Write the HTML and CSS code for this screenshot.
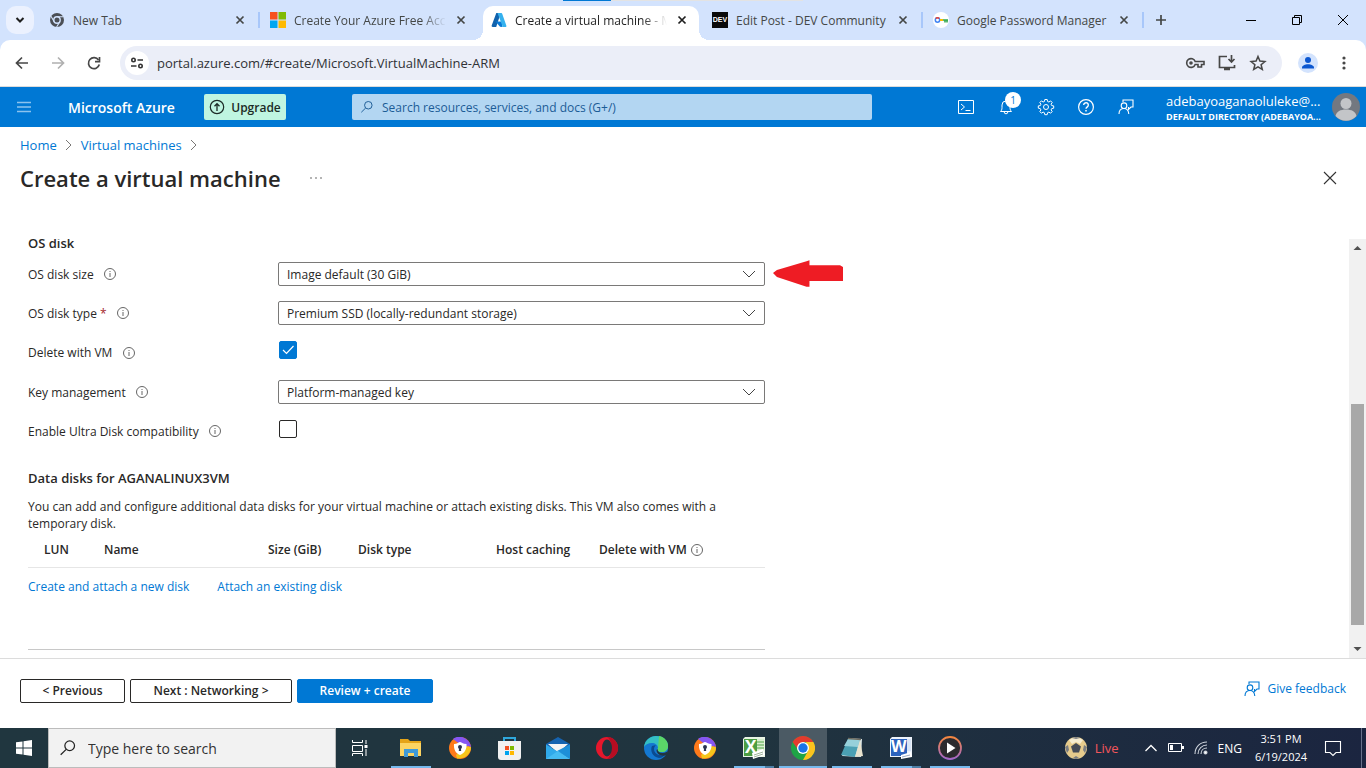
FILE: index.html
```html
<!DOCTYPE html>
<html lang="en">
<head>
<meta charset="UTF-8">
<meta name="viewport" content="width=device-width, initial-scale=1.0">
<title>Create a virtual machine - Microsoft Azure</title>
<link rel="stylesheet" href="styles.css">
</head>
<body>
    <!-- shared icons -->
    <svg class="sprite" aria-hidden="true">
        <symbol id="close" viewBox="0 0 16 16"><path d="M4.500 4.500l7 7M11.500 4.500l-7 7" fill="none" stroke="currentColor" stroke-width="1.700"/></symbol>
        <symbol id="info" viewBox="0 0 14 14"><circle cx="7" cy="7" r="5.500" fill="none" stroke="currentColor"/><path d="M7 6v4M7 4v1" stroke="currentColor"/></symbol>
        <symbol id="down" viewBox="0 0 16 16"><path d="M2 5l6 6 6-6" fill="none" stroke="currentColor"/></symbol>
        <symbol id="right" viewBox="0 0 10 12"><path d="M2 1l5 5-5 5" fill="none" stroke="currentColor"/></symbol>
        <symbol id="search" viewBox="0 0 16 16"><circle cx="9.500" cy="6" r="4.300" fill="none" stroke="currentColor" stroke-width="1.100"/><path d="M6.400 9.200L1.500 14" stroke="currentColor" stroke-width="1.100"/></symbol>
        <symbol id="feedback" viewBox="0 0 16 16"><path d="M5 3V1h10v7h-2l-2.500 2.500V8" fill="none" stroke="currentColor" stroke-width="1.100"/><circle cx="6" cy="6.700" r="2.800" fill="none" stroke="currentColor" stroke-width="1.100"/><path d="M1 15c0-3.500 2-5.500 5-5.500 2.500 0 4.500 2 4.800 5.500" fill="none" stroke="currentColor" stroke-width="1.100"/></symbol>
        <symbol id="avast" viewBox="0 0 24 24"><circle cx="12" cy="12" r="11" fill="#ff7a1a"/><path d="M6 3a11 11 0 0 1 17 9c-5-5-9-7-17-9z" fill="#7a4cf0"/><path d="M5 3c5-4 14-2 17 6l-5 3z" fill="#8657f4"/><path d="M23 11c0 7-6 12-14 11.500L8 19l9-9z" fill="#f5c51b"/><path d="M6 8c3 0 5-2 6-2s3 2 6.500 2c.5 5-2 9.500-6.500 11C7.500 17.500 5.500 13 6 8z" fill="#fff"/><circle cx="12" cy="11" r="2" fill="#2b3350"/><path d="M11.200 11h1.600l.4 4h-2.400z" fill="#2b3350"/></symbol>
    </svg>

    <header class="browser">
        <div class="load-line"></div>
        <div class="tab-strip">
            <button class="tab-search" aria-label="Search tabs"><svg width="16" height="16" viewBox="0 0 16 16"><path d="M4.500 6l3.500 3.500L11.500 6" fill="none" stroke="#1f1f1f" stroke-width="2"/></svg></button>
            <div class="tabs">
                <div class="tab">
                    <svg class="tab-icon" viewBox="0 0 16 16"><circle cx="8" cy="8" r="7" fill="#4b4f55"/><circle cx="8" cy="8" r="3.200" fill="#4b4f55" stroke="#d3e3fd" stroke-width="1.400"/><path d="M8 4.700h6.500M5.200 9.700L2 4.200M10.800 9.700L7.600 15" stroke="#d3e3fd" stroke-width="1.100"/></svg>
                    <span class="tab-title">New Tab</span>
                    <button class="tab-close" aria-label="Close tab"><svg><use href="#close"/></svg></button>
                    <span class="tab-line"></span>
                </div>
                <div class="tab">
                    <svg class="tab-icon" viewBox="0 0 16 16"><path d="M0 0h7.500v7.500H0z" fill="#f7511d"/><path d="M8.500 0H16v7.500H8.500z" fill="#80bb03"/><path d="M0 8.500h7.500V16H0z" fill="#02a6f0"/><path d="M8.500 8.500H16V16H8.500z" fill="#feba02"/></svg>
                    <span class="tab-title faded">Create Your Azure Free Acco</span>
                    <button class="tab-close" aria-label="Close tab"><svg><use href="#close"/></svg></button>
                </div>
                <div class="tab active">
                    <svg class="tab-icon" viewBox="0 0 16 16"><path d="M5.300 1h4.400L5.200 15H1.700c-.8 0-1.300-.7-1-1.400z" fill="#1062ad"/><path d="M4.500 9.500h7L11 15l-2-.2z" fill="#0878d4"/><path d="M6.500 1h3.800c.4 0 .8.300.9.700l4.200 12c.2.700-.3 1.300-1 1.300h-4c.7 0 1.100-.7.900-1.300z" fill="#35b1ee"/></svg>
                    <span class="tab-title faded">Create a virtual machine - M</span>
                    <button class="tab-close" aria-label="Close tab"><svg><use href="#close"/></svg></button>
                </div>
                <div class="tab">
                    <span class="tab-icon dev">DEV</span>
                    <span class="tab-title">Edit Post - DEV Community</span>
                    <button class="tab-close" aria-label="Close tab"><svg><use href="#close"/></svg></button>
                    <span class="tab-line"></span>
                </div>
                <div class="tab">
                    <svg class="tab-icon" viewBox="0 0 16 16"><circle cx="8" cy="8" r="8" fill="#fff"/><circle cx="4.500" cy="8" r="2.200" fill="none" stroke="#4285f4" stroke-width="1.500"/><path d="M2.800 6.500a2.200 2.200 0 0 1 3.400 0" fill="none" stroke="#ea4335" stroke-width="1.500"/><path d="M7 8h3" stroke="#fbbc04" stroke-width="2"/><path d="M10 8h5M12 8v2.500M14 8v2.500" stroke="#34a853" stroke-width="1.600"/></svg>
                    <span class="tab-title">Google Password Manager</span>
                    <button class="tab-close" aria-label="Close tab"><svg><use href="#close"/></svg></button>
                    <span class="tab-line"></span>
                </div>
            </div>
            <button class="new-tab" aria-label="New tab"><svg width="16" height="16" viewBox="0 0 16 16"><path d="M8 3v10M3 8h10" stroke="#444746" stroke-width="1.700"/></svg></button>
            <div class="window-buttons">
                <button aria-label="Minimize"><svg width="12" height="12" viewBox="0 0 12 12"><path d="M1 6.500h10" stroke="#000"/></svg></button>
                <button aria-label="Restore"><svg width="12" height="12" viewBox="0 0 12 12"><path d="M1.500 3.500h7v7h-7zM3.500 3.500v-2h7v7h-2" fill="none" stroke="#000"/></svg></button>
                <button aria-label="Close"><svg width="12" height="12" viewBox="0 0 12 12"><path d="M1 1l10 10M11 1L1 11" stroke="#000"/></svg></button>
            </div>
        </div>
        <div class="toolbar">
            <button aria-label="Back"><svg width="16" height="16" viewBox="0 0 16 16"><path d="M14 8H3M8 2.500L2.500 8 8 13.500" fill="none" stroke="#474747" stroke-width="1.700"/></svg></button>
            <button aria-label="Forward"><svg width="16" height="16" viewBox="0 0 16 16"><path d="M2 8h11M8 2.500L13.500 8 8 13.500" fill="none" stroke="#b0b0b0" stroke-width="1.700"/></svg></button>
            <button aria-label="Reload"><svg width="16" height="16" viewBox="0 0 16 16"><path d="M13.300 9.500A5.500 5.500 0 1 1 12.500 5" fill="none" stroke="#474747" stroke-width="1.700"/><path d="M13.500 2v4.700H9" fill="none" stroke="#474747" stroke-width="1.700"/></svg></button>
            <div class="omnibox">
                <button class="site-info" aria-label="Site information"><svg width="14" height="14" viewBox="0 0 14 14" fill="none" stroke="#333" stroke-width="1.600"><circle cx="3.500" cy="4" r="1.700"/><path d="M7.500 4H13M1 10h5.500"/><circle cx="10.500" cy="10" r="1.700"/></svg></button>
                <input class="url" type="text" aria-label="Address" value="portal.azure.com/#create/Microsoft.VirtualMachine-ARM">
                <button aria-label="Passwords"><svg width="20" height="20" viewBox="0 0 20 20" fill="none" stroke="#474747" stroke-width="1.600"><path d="M10.200 8.500A4.400 4.400 0 1 0 10.200 11.500H13V14h3.500v-2.500H19v-3z"/><circle cx="6" cy="10" r="1" fill="#474747"/></svg></button>
                <button aria-label="Install app"><svg width="20" height="20" viewBox="0 0 20 20" fill="none" stroke="#474747" stroke-width="1.700"><path d="M10 3.500H2.500v11h15V12M14.500 2v6.500M11.500 6l3 3 3-3"/><path d="M7 16h6" stroke-width="2.500"/></svg></button>
                <button aria-label="Bookmark"><svg width="18" height="18" viewBox="0 0 18 18"><path d="M9 2.500l1.900 4.600 5 .4-3.800 3.200 1.200 4.800L9 12.900l-4.300 2.600 1.200-4.800-3.800-3.200 5-.4z" fill="none" stroke="#474747" stroke-width="1.500"/></svg></button>
            </div>
            <button class="profile" aria-label="Profile"><svg width="20" height="20" viewBox="0 0 20 20"><circle cx="10" cy="10" r="10" fill="#d3e3fd"/><circle cx="10" cy="7" r="3" fill="#0b57d0"/><path d="M4 15.500v-1c0-2 3-3.300 6-3.300s6 1.300 6 3.300v1z" fill="#0b57d0"/></svg></button>
            <button class="more" aria-label="Menu"><svg width="16" height="16" viewBox="0 0 16 16" fill="#474747"><circle cx="8" cy="3" r="1.600"/><circle cx="8" cy="8" r="1.600"/><circle cx="8" cy="13" r="1.600"/></svg></button>
        </div>
    </header>

    <nav class="azure-bar">
        <button class="menu" aria-label="Portal menu"><svg width="14" height="12" viewBox="0 0 14 12"><path d="M0 1.500h14M0 6h14M0 10.500h14" stroke="#8cc3ee" stroke-width="1.500"/></svg></button>
        <a class="brand" href="#">Microsoft Azure</a>
        <button class="upgrade"><svg width="16" height="16" viewBox="0 0 16 16" fill="none" stroke="#1b2b26"><circle cx="8" cy="8" r="6.700" stroke-width="1.200"/><path d="M8 12V5M5.500 7.200L8 4.700l2.500 2.500" stroke-width="1.300"/></svg>Upgrade</button>
        <label class="portal-search">
            <svg width="14" height="14"><use href="#search"/></svg>
            <input type="text" aria-label="Search" placeholder="Search resources, services, and docs (G+/)">
        </label>
        <div class="bar-icons">
            <button aria-label="Cloud Shell"><svg width="18" height="16" viewBox="0 0 18 16" fill="none" stroke="#fff"><path d="M1.500 1.500h15v13h-15zM4 5l3.500 3L4 11M8.500 11.500h5"/></svg></button>
            <button class="bell" aria-label="Notifications"><svg width="16" height="16" viewBox="0 0 16 16" fill="none" stroke="#fff"><path d="M2.500 12.500h11c-1-1-1.500-2-1.500-4V6a4 4 0 0 0-8 0v2.500c0 2-.5 3-1.500 4zM6.200 13a1.800 1.800 0 0 0 3.600 0"/></svg><span class="badge">1</span></button>
            <button aria-label="Settings"><svg width="18" height="18" viewBox="0 0 18 18" fill="none" stroke="#fff"><circle cx="9" cy="9" r="2.500"/><path d="M7.800 1.500h2.400l.4 2 1.300.5 1.700-1.100 1.600 1.600-1.100 1.700.6 1.400 2 .3v2.300l-2 .4-.6 1.300 1.100 1.700-1.600 1.600-1.700-1.100-1.300.6-.4 2H7.800l-.4-2-1.300-.6-1.700 1.100-1.600-1.600 1.100-1.700-.6-1.300-2-.4V7.900l2-.3.600-1.400-1.100-1.700 1.600-1.600L6.100 4l1.300-.5z"/></svg></button>
            <button aria-label="Help"><svg width="18" height="18" viewBox="0 0 18 18" fill="none" stroke="#fff" stroke-width="1.200"><circle cx="9" cy="9" r="7.400"/><path d="M6.700 7a2.300 2.300 0 1 1 3.600 1.900C9.400 9.500 9 9.900 9 10.800" stroke-width="1.400"/><path d="M9 12v1.500" stroke-width="1.500"/></svg></button>
            <button aria-label="Feedback"><svg width="16" height="16"><use href="#feedback"/></svg></button>
        </div>
        <button class="account">
            <span class="account-text"><span class="mail">adebayoaganaoluleke@...</span><span class="directory">DEFAULT DIRECTORY (ADEBAYOA...</span></span>
            <svg width="28" height="28" viewBox="0 0 28 28"><circle cx="14" cy="14" r="14" fill="#737880"/><circle cx="14" cy="10.500" r="5.500" fill="#c3c5c8"/><path d="M3.500 23c1-4.500 5-6.500 10.500-6.500s9.500 2 10.500 6.500a14 14 0 0 1-21 0z" fill="#c3c5c8"/></svg>
        </button>
    </nav>

    <main class="blade">
        <div class="breadcrumb">
            <a href="#">Home</a><svg width="10" height="12"><use href="#right"/></svg>
            <a href="#">Virtual machines</a><svg width="10" height="12"><use href="#right"/></svg>
        </div>
        <div class="title-row">
            <h1>Create a virtual machine</h1>
            <button class="dots" aria-label="More"><svg width="14" height="4" viewBox="0 0 14 4" fill="#555"><circle cx="2" cy="2" r=".8"/><circle cx="7" cy="2" r=".8"/><circle cx="12" cy="2" r=".8"/></svg></button>
            <button class="blade-close" aria-label="Close"><svg width="14" height="14" viewBox="0 0 14 14"><path d="M1 1l12 12M13 1L1 13" stroke="#333" stroke-width="1.100"/></svg></button>
        </div>

        <div class="scroll-area">
            <form class="form">
                <h2>OS disk</h2>
                <div class="fields">
                    <div class="field">
                        <label for="size">OS disk size <svg><use href="#info"/></svg></label>
                        <div class="select"><select id="size"><option>Image default (30 GiB)</option></select><svg><use href="#down"/></svg></div>
                        <svg class="pointer" width="70" height="28" viewBox="0 0 71 28"><path d="M0 13l4-3L34 1l3-1v5h31l3 2v14H37v6h-3L4 17z" fill="#ee1c24"/></svg>
                    </div>
                    <div class="field">
                        <label for="type">OS disk type <span class="required">*</span> <svg><use href="#info"/></svg></label>
                        <div class="select"><select id="type"><option>Premium SSD (locally-redundant storage)</option></select><svg><use href="#down"/></svg></div>
                    </div>
                    <div class="field tall">
                        <label for="delete">Delete with VM <svg><use href="#info"/></svg></label>
                        <span class="check"><input type="checkbox" id="delete" checked><svg viewBox="0 0 18 18"><path d="M4 9l3.500 3.500L14.500 5" fill="none" stroke="#fff" stroke-width="1.200"/></svg></span>
                    </div>
                    <div class="field">
                        <label for="key">Key management <svg><use href="#info"/></svg></label>
                        <div class="select"><select id="key"><option>Platform-managed key</option></select><svg><use href="#down"/></svg></div>
                    </div>
                    <div class="field">
                        <label for="ultra">Enable Ultra Disk compatibility <svg><use href="#info"/></svg></label>
                        <span class="check"><input type="checkbox" id="ultra"></span>
                    </div>
                </div>

                <h2 class="data-title">Data disks for AGANALINUX3VM</h2>
                <p>You can add and configure additional data disks for your virtual machine or attach existing disks. This VM also comes with a temporary disk.</p>
                <table class="disks">
                    <thead>
                        <tr>
                            <th class="lun">LUN</th>
                            <th class="name">Name</th>
                            <th class="gib">Size (GiB)</th>
                            <th class="kind">Disk type</th>
                            <th class="host">Host caching</th>
                            <th>Delete with VM <svg><use href="#info"/></svg></th>
                        </tr>
                    </thead>
                </table>
                <div class="disk-links">
                    <a href="#">Create and attach a new disk</a>
                    <a href="#">Attach an existing disk</a>
                </div>
                <hr>
            </form>
            <div class="scrollbar">
                <svg width="17" height="17" viewBox="0 0 17 17"><path d="M4.500 11h8l-4-4z" fill="#505050"/></svg>
                <div class="track"><div class="thumb"></div></div>
                <svg width="17" height="17" viewBox="0 0 17 17"><path d="M4.500 6h8l-4 4z" fill="#505050"/></svg>
            </div>
        </div>

        <footer class="actions">
            <button class="previous">&lt; Previous</button>
            <button class="next">Next : Networking &gt;</button>
            <button class="review">Review + create</button>
            <a class="feedback" href="#"><svg width="16" height="16"><use href="#feedback"/></svg>Give feedback</a>
        </footer>
    </main>

    <div class="taskbar">
        <button class="start" aria-label="Start"><svg width="16" height="16" viewBox="0 0 16 16" fill="#fff"><path d="M0 2.300L6.500 1.400v6.100H0zM7.500 1.200L16 0v7.500H7.500zM0 8.500h6.500v6.100L0 13.700zM7.500 8.500H16V16l-8.500-1.200z"/></svg></button>
        <label class="task-search">
            <svg width="18" height="18"><use href="#search"/></svg>
            <input type="text" aria-label="Search Windows" placeholder="Type here to search">
        </label>
        <button class="task-view" aria-label="Task View"><svg width="16" height="16" viewBox="0 0 16 16" fill="none" stroke="#fff"><path d="M.5 0v2.500h10V0M.5 5.500h10v6H.5zM.5 16v-2.500h10V16M14 0v4M14 9v7"/><path d="M12.500 5h3v3h-3z" fill="#fff" stroke="none"/></svg></button>
        <div class="apps">
            <button class="app open" aria-label="File Explorer"><svg viewBox="0 0 24 24"><path d="M1 3h8l2 2h11v15H1z" fill="#e5a418"/><path d="M1 7h21v13H1z" fill="#fcd462"/><path d="M5 13h14v8h-4v-4H9v4H5z" fill="#3f9ad8"/></svg></button>
            <button class="app" aria-label="Secure Browser"><svg><use href="#avast"/></svg></button>
            <button class="app" aria-label="Store"><svg viewBox="0 0 24 24"><path d="M7 6V2h11v4" fill="none" stroke="#2fa8dd" stroke-width="2"/><path d="M1 5h23v16q0 3-3 3H4q-3 0-3-3z" fill="#f1f1f1"/><path d="M8 10h4v4H8z" fill="#f25022"/><path d="M13 10h4v4h-4z" fill="#7fba00"/><path d="M8 15h4v4H8z" fill="#00a4ef"/><path d="M13 15h4v4h-4z" fill="#ffb900"/></svg></button>
            <button class="app" aria-label="Mail"><svg viewBox="0 0 24 24"><path d="M0 8l12-7 12 7v4H0z" fill="#1563b0"/><path d="M2 8h20l-10 9z" fill="#f4f4f4"/><path d="M0 8.500L24 23H0z" fill="#30a9ea"/><path d="M24 8.500V23L11 15z" fill="#1d8fd8"/><path d="M0 23l12-8 12 8z" fill="#45bbf2"/></svg></button>
            <button class="app" aria-label="Opera"><svg viewBox="0 0 24 24"><circle cx="12" cy="12" r="11" fill="#e5172c"/><path d="M12 1a11 11 0 0 1 0 22c6-3 6-19 0-22z" fill="#b70d22"/><ellipse cx="12" cy="12" rx="5" ry="8.500" fill="#22343f"/></svg></button>
            <button class="app" aria-label="Edge"><svg viewBox="0 0 24 24"><circle cx="12" cy="12" r="12" fill="#1478d1"/><path d="M0 11C1 4 6 0 12 0c8 0 12 5 12 10 0 4-3 6-6 6-4 0-5-2-4-4 0-3-3-5-6-5-4 0-7 2-8 4z" fill="#34bfc4"/><path d="M15 0c6 1 9 6 9 10s-3 6-6 6c-4 0-5-2-4-4z" fill="#5bd568"/><path d="M8 10c-2 4 0 11 7 12 3 0 5-2 7-4-6 3-12 0-12-5 0-2 1-3 2-4z" fill="#0b4b91"/><path d="M13.500 13c0 4 5 5 9 3l1-1v3l-1 1c-5 2-10-1-10-5z" fill="#22353f"/></svg></button>
            <button class="app" aria-label="Secure Browser"><svg><use href="#avast"/></svg></button>
            <button class="app open stacked" aria-label="Excel"><svg viewBox="0 0 24 24"><path d="M1 3l2-2h20v20H1z" fill="#e9f4e4"/><path d="M2 3h13v17H2z" fill="#4c9d43"/><path d="M15 3h7v13h-7z" fill="#d8efcf"/><path d="M15 6h7M15 9h7M15 12h7" stroke="#55a64b"/><text x="3" y="17" font-family="Open Sans, sans-serif" font-size="17" font-weight="700" fill="#fff">X</text><path d="M10 17l11-4 2 6-12 4z" fill="#fff"/><path d="M12 19l9-3M12 21l9-3" stroke="#9fb49c"/></svg></button>
            <button class="app open current" aria-label="Chrome"><svg viewBox="0 0 24 24"><circle cx="12" cy="12" r="12" fill="#1ea446"/><path d="M1.600 6A12 12 0 0 1 22.400 6H12L8 15z" fill="#e33b2e"/><path d="M22.400 6A12 12 0 0 1 12 24l5-9-2-9z" fill="#fcc31e"/><circle cx="12" cy="12" r="6" fill="#fff"/><circle cx="12" cy="12" r="4.700" fill="#1a73e8"/></svg></button>
            <button class="app open" aria-label="Notepad"><svg viewBox="0 0 24 24"><path d="M9 2l13 1-1 18-19-1z" fill="#d9e6e8"/><path d="M8 3l12 1-5 17-14-2z" fill="#4ba0b3"/><path d="M8 3l12 1-2 7-14-1z" fill="#96d0da"/><path d="M20 4l3 16-8 1z" fill="#e8e2cd"/><path d="M8 2.500l13 1" stroke="#6d6a5e" stroke-width="1.500"/></svg></button>
            <button class="app open stacked" aria-label="Word"><svg viewBox="0 0 24 24"><path d="M1 3l2-2h20v20H1z" fill="#edf3fb"/><path d="M2 3h16v17H2z" fill="#2b62bd"/><path d="M18 3h4v12h-4z" fill="#d8e5f6"/><text x="2" y="16" font-family="Open Sans, sans-serif" font-size="16" font-weight="700" fill="#fff">W</text><path d="M12 19l10-3 1 5-11 2z" fill="#fff"/><path d="M13 21l8-2" stroke="#9aaac4"/></svg></button>
            <button class="app open" aria-label="Media Player"><svg viewBox="0 0 24 24"><defs><linearGradient id="ring" x1="0" y1="0" x2="0" y2="1"><stop offset="0" stop-color="#f5873f"/><stop offset="1" stop-color="#a267c9"/></linearGradient></defs><circle cx="12" cy="12" r="11" fill="#2b2a2e" stroke="url(#ring)" stroke-width="1.800"/><path d="M9 6.500v11l8.500-5.500z" fill="#fff"/></svg></button>
        </div>
        <div class="tray">
            <button class="live"><svg width="22" height="22" viewBox="0 0 22 22"><circle cx="11" cy="11" r="11" fill="#e6cb8c"/><path d="M4 3a11 11 0 0 1 14 0l-3 4-4-2-4 2z" fill="#f6ecd0"/><path d="M11 6l5 3.500-2 6H8l-2-6z" fill="#454b56"/><path d="M0 10l3-2 1 5-2 3zM22 10l-3-2-1 5 2 3zM8 21l3-2 3 2-3 1zM7 1l4 1 4-1-4-1z" fill="#7b7d80"/></svg>Live</button>
            <svg width="14" height="10" viewBox="0 0 14 10"><path d="M1.500 8L7 2.500 12.500 8" fill="none" stroke="#fff" stroke-width="1.300"/></svg>
            <svg width="16" height="10" viewBox="0 0 16 10"><path d="M.5.500h13v8H.5z" fill="none" stroke="#fff"/><path d="M2 2h3v5H2zM14 3h2v3h-2z" fill="#fff"/></svg>
            <svg width="14" height="14" viewBox="0 0 14 14" fill="none" stroke="#cfd5dd" stroke-width="1.100"><path d="M1 13C1 6 6 1 13 1M4 13c0-5 4-9 9-9M7 13c0-3.500 2.500-6 6-6"/><circle cx="11.500" cy="11.500" r="1.500" fill="#fff"/></svg>
            <span class="lang">ENG</span>
            <span class="clock"><span>3:51 PM</span><span>6/19/2024</span></span>
            <svg class="notes" width="18" height="17" viewBox="0 0 18 17"><path d="M1.500 1.500h15v11H12l-3 3-3-3H1.500z" fill="none" stroke="#fff" stroke-width="1.100"/></svg>
            <span class="show-desktop"></span>
        </div>
    </div>
</body>
</html>
```
FILE: styles.css
```css
* {
    box-sizing: border-box;
}
body {
    margin: 0;
    height: 100vh;
    display: flex;
    flex-direction: column;
    overflow: hidden;
    font-family: "Open Sans", "Noto Sans", sans-serif;
    font-size: 12px;
    color: #292827;
    background: #fff;
}
button, input, select {
    font: inherit;
    color: inherit;
}
button {
    display: flex;
    align-items: center;
    justify-content: center;
    padding: 0;
    border: none;
    background: none;
    cursor: pointer;
    white-space: nowrap;
}
svg {
    flex: none;
}
a {
    color: #0078d4;
    text-decoration: none;
}
.sprite {
    position: absolute;
    width: 0;
    height: 0;
}

/* browser window */
.browser {
    position: relative;
    background: #d3e3fd;
}
.load-line {
    position: absolute;
    top: 0;
    left: 563px;
    width: 240px;
    height: 1px;
    background: linear-gradient(to right, #0078d4 20%, #e3e3e3 20%);
}
.tab-strip {
    display: flex;
    align-items: center;
    height: 40px;
    padding-left: 6px;
}
.tab-search {
    width: 28px;
    height: 28px;
    margin-right: 7px;
    border-radius: 10px;
    background: #ebf1fe;
}
.tabs {
    display: flex;
    flex: 0 1 1105px;
    height: 34px;
    align-self: flex-end;
    min-width: 0;
}
.tab {
    display: flex;
    align-items: center;
    flex: 0 1 221px;
    min-width: 0;
    padding: 0 2px 6px 8px;
    color: #444746;
}
.tab-icon {
    flex: none;
    width: 16px;
    height: 16px;
    margin-right: 8px;
}
.dev {
    background: #0a0a0a;
    color: #fff;
    font-family: "Liberation Sans", sans-serif;
    font-size: 7px;
    font-weight: bold;
    line-height: 16px;
    text-align: center;
}
.tab-title {
    flex: 1;
    overflow: hidden;
    white-space: nowrap;
}
.faded {
    mask-image: linear-gradient(to left, transparent, #000 24px);
}
.tab-close {
    margin: 0 10px 0 7px;
}
.tab-close svg {
    width: 16px;
    height: 16px;
}
.tab-line {
    width: 2px;
    height: 16px;
    background: #a8c7fa;
}
.tab:nth-child(2) {
    padding-right: 4px;
}
.tab.active {
    position: relative;
    flex-basis: 216px;
    margin-right: 5px;
    padding-right: 0;
    border-radius: 10px 10px 0 0;
    background: #fff;
    color: #1f1f1f;
}
.active .tab-close {
    margin-right: 9px;
}
.active::before, .active::after {
    content: "";
    position: absolute;
    bottom: 0;
    width: 10px;
    height: 10px;
}
.active::before {
    right: 100%;
    background: radial-gradient(circle at 0 0, transparent 10px, #fff 10px);
}
.active::after {
    left: 100%;
    background: radial-gradient(circle at 100% 0, transparent 10px, #fff 10px);
}
.new-tab {
    width: 30px;
    height: 30px;
}
.window-buttons {
    display: flex;
    margin-left: auto;
}
.window-buttons button {
    width: 46px;
    height: 40px;
}
.toolbar {
    display: flex;
    align-items: center;
    height: 47px;
    padding: 0 14px;
    gap: 20px;
    border-bottom: 1px solid #dcdcdc;
    border-radius: 10px 10px 0 0;
    background: #fff;
}
.omnibox {
    display: flex;
    flex: 1;
    align-items: center;
    height: 34px;
    gap: 12px;
    margin: 0 -4px 0 -2px;
    padding: 0 15px 0 5px;
    border-radius: 17px;
    background: #ebeef8;
}
.profile {
    margin-right: -2px;
}
.site-info {
    width: 24px;
    height: 24px;
    border-radius: 50%;
    background: #fff;
}
.url {
    flex: 1;
    min-width: 0;
    margin-left: -4px;
    padding: 0;
    border: none;
    background: none;
    font-size: 13px;
    color: #303236;
}

/* portal header */
.azure-bar {
    display: flex;
    align-items: center;
    height: 40px;
    padding: 0 6px 0 17px;
    background: #0078d4;
    color: #fff;
}
.brand {
    width: 173px;
    padding-left: 37px;
    font-size: 14px;
    font-weight: 600;
    color: #fff;
    white-space: nowrap;
}
.upgrade {
    width: 82px;
    height: 26px;
    gap: 6px;
    border-radius: 2px;
    background: #bff5e1;
    color: #1b2b26;
    font-weight: 600;
}
.portal-search {
    display: flex;
    align-items: center;
    flex: 0 1 520px;
    height: 26px;
    gap: 8px;
    margin-left: 66px;
    padding: 0 8px;
    border-radius: 2px;
    background: #b3d6f2;
    color: #1c5c96;
}
.portal-search input {
    flex: 1;
    min-width: 0;
    padding: 0;
    border: none;
    background: none;
}
.portal-search input::placeholder {
    color: #1c5c96;
}
.bar-icons {
    display: flex;
    margin-left: auto;
}
.bar-icons button {
    position: relative;
    width: 40px;
    height: 40px;
}
.badge {
    position: absolute;
    top: 5px;
    right: 5px;
    width: 16px;
    height: 16px;
    border-radius: 50%;
    background: #fff;
    color: #0078d4;
    font-size: 10px;
    line-height: 16px;
}
.account {
    gap: 6px;
    margin-left: 20px;
}
.account-text {
    display: flex;
    flex-direction: column;
    width: 160px;
    padding-top: 4px;
    text-align: left;
    line-height: 16px;
}
.mail {
    font-size: 13px;
}
.directory {
    font-size: 9px;
    font-weight: 700;
}

/* blade */
.blade {
    display: flex;
    flex-direction: column;
    flex: 1;
    min-height: 0;
}
.breadcrumb {
    display: flex;
    align-items: center;
    gap: 7px;
    padding: 8px 20px 0;
    font-size: 13px;
    line-height: 20px;
}
.breadcrumb svg {
    color: #797775;
}
.title-row {
    display: flex;
    align-items: center;
    height: 84px;
    padding: 0 29px 38px 20px;
}
h1 {
    margin: 0;
    font-size: 22px;
    font-weight: 600;
    line-height: 30px;
}
.dots {
    margin-left: 28px;
}
.blade-close {
    margin-left: auto;
}
.scroll-area {
    display: flex;
    flex: 1;
    justify-content: space-between;
    min-height: 0;
    overflow: hidden;
}
.form {
    margin: -6px 0 0 28px;
}
h2 {
    margin: 0 0 9px;
    font-size: 13px;
    font-weight: 600;
    line-height: 20px;
}
.fields {
    display: grid;
    gap: 15px;
}
.field {
    display: flex;
    align-items: center;
    height: 24px;
}
.tall {
    height: 25px;
}
.field label {
    display: flex;
    align-items: center;
    width: 250px;
    white-space: pre;
}
.field label svg, .disks svg {
    width: 14px;
    height: 14px;
    color: #666;
}
.field label svg {
    margin-left: 6px;
}
.required {
    margin-right: 3px;
    color: #a4262c;
}
.select {
    display: grid;
    align-items: center;
    width: 487px;
}
.select select, .select svg {
    grid-area: 1 / 1;
}
.select select {
    height: 24px;
    padding: 0 8px;
    border: 1px solid #7a7978;
    border-radius: 2px;
    background: #fff;
    appearance: none;
}
.select svg {
    justify-self: end;
    width: 16px;
    height: 16px;
    margin-right: 8px;
    color: #444;
    pointer-events: none;
}
.pointer {
    margin-left: 8px;
}
.check {
    display: grid;
    align-self: flex-start;
    margin: 1px;
}
.check input, .check svg {
    grid-area: 1 / 1;
    width: 18px;
    height: 18px;
    margin: 0;
    pointer-events: none;
}
.check input {
    border: 1px solid #292827;
    border-radius: 2px;
    appearance: none;
    pointer-events: auto;
}
.check input:checked {
    border-color: #0078d4;
    background: #0078d4;
}
.data-title {
    margin: 25px 0 10px;
}
.form p {
    width: 737px;
    margin: 0;
    line-height: 17px;
}
.disks {
    width: 737px;
    border-collapse: collapse;
    table-layout: fixed;
}
.disks th {
    height: 35px;
    padding: 0 0 0 16px;
    border-bottom: 1px solid #e6e6e6;
    font-weight: 600;
    text-align: left;
    white-space: nowrap;
}
.disks svg {
    vertical-align: -3px;
}
.lun {
    width: 60px;
}
.name {
    width: 164px;
}
.gib {
    width: 90px;
}
.kind {
    width: 138px;
}
.host {
    width: 103px;
}
.disk-links {
    display: flex;
    gap: 28px;
    margin-top: 10px;
    line-height: 18px;
}
hr {
    width: 737px;
    margin: 53px 0 0;
    border: none;
    border-top: 1px solid #c8c8c8;
}
.scrollbar {
    display: flex;
    flex-direction: column;
    width: 17px;
    background: #f1f1f1;
}
.track {
    display: flex;
    flex: 1;
    flex-direction: column;
    padding: 0 2px;
}
.track::before, .track::after {
    content: "";
    flex: 148;
}
.track::after {
    flex: 16;
}
.thumb {
    flex: 221;
    background: #a8a8a8;
}
.actions {
    display: flex;
    align-items: flex-start;
    gap: 5px;
    height: 70px;
    padding: 20px 20px 0;
    border-top: 1px solid #dcdcdc;
}
.actions button {
    height: 24px;
    padding-bottom: 2px;
    border: 1px solid #292827;
    border-radius: 2px;
    font-weight: 600;
}
.actions .previous {
    width: 105px;
}
.actions .next {
    width: 162px;
}
.actions .review {
    width: 136px;
    border-color: #0078d4;
    background: #0078d4;
    color: #fff;
}
.feedback {
    display: flex;
    align-items: center;
    gap: 7px;
    margin-left: auto;
    line-height: 20px;
}

/* taskbar */
.taskbar {
    display: flex;
    height: 40px;
    background: linear-gradient(to right, #20363f, #20343f 55%, #1b2540);
    color: #fff;
}
.start, .task-view {
    width: 48px;
}
.task-search {
    display: flex;
    align-items: center;
    width: 288px;
    gap: 11px;
    padding: 0 10px;
    border: 1px solid #bcbcbc;
    background: #f2f2f2;
    color: #222;
}
.task-search input {
    flex: 1;
    min-width: 0;
    padding: 0;
    border: none;
    background: none;
    font-size: 14px;
}
.task-search input::placeholder {
    color: #333;
}
.apps {
    display: flex;
    gap: 1px;
    margin-left: 3px;
}
.app {
    position: relative;
    width: 48px;
}
.app svg {
    width: 24px;
    height: 24px;
}
.open::after {
    content: "";
    position: absolute;
    right: 4px;
    bottom: 0;
    left: 4px;
    height: 2px;
    background: #76b9ed;
}
.stacked::after {
    background: linear-gradient(to right, #76b9ed 78%, #4d7ea5 78%);
}
.current {
    background: #4b5a64;
}
.current::after {
    right: 0;
    left: 0;
}
.tray {
    display: flex;
    align-items: center;
    gap: 10px;
    margin-left: auto;
}
.live {
    gap: 8px;
    margin-right: 15px;
    color: #f4565c;
    font-size: 13px;
}
.clock {
    display: flex;
    flex-direction: column;
    width: 58px;
    font-size: 11px;
    line-height: 18px;
    text-align: center;
}
.notes {
    margin-left: 4px;
}
.show-desktop {
    width: 5px;
    height: 40px;
    margin-left: 9px;
    border-left: 1px solid #68718a;
}
```
